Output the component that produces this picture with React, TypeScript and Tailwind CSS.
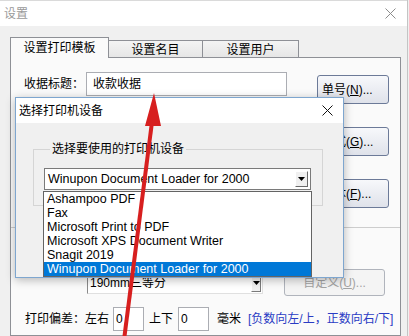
import React from 'react';

function CloseX({ color }: { color: string }) {
  return (
    <svg width="11" height="11" viewBox="0 0 11 11" className="block">
      <path d="M0.5 0.5L10.5 10.5M10.5 0.5L0.5 10.5" stroke={color} strokeWidth="1" fill="none" />
    </svg>
  );
}

function DownTri() {
  return (
    <svg width="7" height="4" viewBox="0 0 7 4" className="block">
      <path d="M0 0H7L3.5 4Z" fill="#000" />
    </svg>
  );
}

const printers = [
  'Ashampoo PDF',
  'Fax',
  'Microsoft Print to PDF',
  'Microsoft XPS Document Writer',
  'Snagit 2019',
  'Winupon Document Loader for 2000',
];

export default function App() {
  return (
    <div className="relative w-[409px] h-[336px] overflow-hidden bg-[#f0f0f0] text-[12px] leading-[16px] text-black font-['Liberation_Sans','Noto_Sans_CJK_SC',sans-serif]">
      {/* 设置 window */}
      <div className="flex flex-col h-full w-[408px] border-r border-[#c4c4c4]">
        <div className="h-[26px] shrink-0 bg-white border-t border-[#dadada] flex items-center justify-between pl-[4px] pr-[11px]">
          <span className="text-[#9a9a9a]">设置</span>
          <CloseX color="#8c8c8c" />
        </div>

        <div className="flex-1 flex flex-col pl-[10px] pt-[11px]">
          {/* tabs */}
          <div className="flex items-end h-[20px]">
            <div className="relative z-10 -mb-px h-[21px] w-[99px] bg-[#fafafa] border-l border-t border-r border-[#8e9096] flex items-center justify-center pb-[1px]">
              设置打印模板
            </div>
            <div className="h-[17px] w-[94px] bg-gradient-to-b from-[#f4f4f4] to-[#e6e6e6] border-t border-r border-[#8e9096] flex items-center justify-center pt-[1px]">
              设置名目
            </div>
            <div className="h-[17px] w-[96px] bg-gradient-to-b from-[#f4f4f4] to-[#e6e6e6] border-t border-r border-[#8e9096] flex items-center justify-center pt-[1px]">
              设置用户
            </div>
          </div>

          {/* tab page */}
          <div className="flex-1 w-[391px] bg-[#fafafa] border border-[#8e9096] flex flex-col">
            <div className="h-[169px] shrink-0 flex justify-between">
              <div className="pl-[13px] pt-[14px]">
                <div className="flex items-center gap-[2px]">
                  <span className="w-[60px]">收据标题：</span>
                  <div className="w-[201px] h-[24px] bg-white border border-[#abadb3] flex items-center pl-[6px]">
                    收款收据
                  </div>
                </div>
              </div>
              <div className="pr-[11px] pt-[17px] flex flex-col gap-[23px]">
                <div className="w-[72px] h-[29px] rounded-[3px] border border-[#6c7a98] bg-gradient-to-b from-[#f7f8fb] to-[#dfe2ea] flex items-center pl-[4px]">
                  单号(<span className="underline">N</span>)...
                </div>
                <div className="w-[72px] h-[29px] rounded-[3px] border border-[#6c7a98] bg-gradient-to-b from-[#f7f8fb] to-[#dfe2ea] flex items-center pl-[4px]">
                  格式(<span className="underline">G</span>)...
                </div>
                <div className="w-[72px] h-[29px] rounded-[3px] border border-[#6c7a98] bg-gradient-to-b from-[#f7f8fb] to-[#dfe2ea] flex items-center pl-[4px]">
                  字体(<span className="underline">F</span>)...
                </div>
              </div>
            </div>

            <div className="border-t border-[#cdcdcd] flex flex-col">
              <div className="flex items-start pt-[41px] pl-[76px]">
                <div className="mt-[3px] w-[176px] h-[22px] bg-white border-t border-l border-[#8a8a8a] border-b border-r border-b-[#e0e0e0] border-r-[#e0e0e0] flex items-center justify-between pl-[2px] pr-[1px]">
                  <span>190mm三等分</span>
                  <div className="w-[10px] h-[17px] bg-[#f0f0f0] border border-t-white border-l-white border-b-[#7a7a7a] border-r-[#7a7a7a] flex items-center justify-center">
                    <DownTri />
                  </div>
                </div>
                <div className="ml-[21px] w-[101px] h-[27px] rounded-[3px] border border-[#b0b4bc] bg-[#f4f4f4] text-[#a3a3a3] flex items-center justify-center">
                  自定义(<span className="underline">U</span>)...
                </div>
              </div>

              <div className="mt-[11px] pl-[14px] flex items-center h-[24px]">
                <span className="w-[60px]">打印偏差：</span>
                <span className="w-[24px]">左右</span>
                <div className="ml-[4px] w-[31px] h-[24px] bg-white border border-[#abadb3] flex items-center pl-[2px]">0</div>
                <span className="ml-[5px] w-[24px]">上下</span>
                <div className="ml-[5px] w-[31px] h-[24px] bg-white border border-[#abadb3] flex items-center pl-[2px]">0</div>
                <span className="ml-[8px]">毫米</span>
                <span className="ml-[7px] text-[#2a3cc4]">[负数向左/上，正数向右/下]</span>
              </div>
            </div>
          </div>
        </div>
      </div>

      {/* 选择打印机设备 dialog on top */}
      <div className="absolute left-[15px] top-[97px] w-[329px] h-[181px] border border-[#7ea6cf] bg-[#f0f0f0] flex flex-col shadow-[0_2px_9px_rgba(0,0,0,0.28)]">
        <div className="h-[25px] shrink-0 bg-white flex items-center justify-between pl-[3px] pr-[10px]">
          <span>选择打印机设备</span>
          <CloseX color="#111" />
        </div>
        <div className="pl-[17px] pt-[18px]">
          <fieldset className="w-[290px] h-[65px] border border-[#d5d5d5] px-[10px]">
            <legend className="ml-[6px] px-[2px] leading-[16px]">选择要使用的打印机设备</legend>
            <div className="mt-[11px] w-[267px] h-[22px] bg-white border border-[#7a7a7a] flex items-center justify-between pl-[3px] pr-[2px]">
              <span className="text-[12.5px]">Winupon Document Loader for 2000</span>
              <div className="w-[13px] h-[16px] bg-[#f0f0f0] border border-t-white border-l-white border-b-[#6a6a6a] border-r-[#6a6a6a] flex items-center justify-center">
                <DownTri />
              </div>
            </div>
          </fieldset>
        </div>
      </div>

      {/* open dropdown list */}
      <div className="absolute left-[43px] top-[191px] w-[269px] h-[86px] bg-white border border-[#646464] text-[12.5px]">
        {printers.map((p, i) => (
          <div
            key={p}
            className={i === printers.length - 1 ? 'h-[14px] leading-[14px] pl-[3px] bg-[#0078d7] text-white' : 'h-[14px] leading-[14px] pl-[3px]'}
          >
            {p}
          </div>
        ))}
      </div>

      {/* red annotation arrow */}
      <svg className="absolute inset-0 pointer-events-none" width="409" height="336" viewBox="0 0 409 336">
        <line x1="152" y1="122" x2="124" y2="340" stroke="#d71f1f" strokeWidth="4" />
        <polygon points="154,93 145,126 161,126" fill="#d71f1f" />
      </svg>
    </div>
  );
}
